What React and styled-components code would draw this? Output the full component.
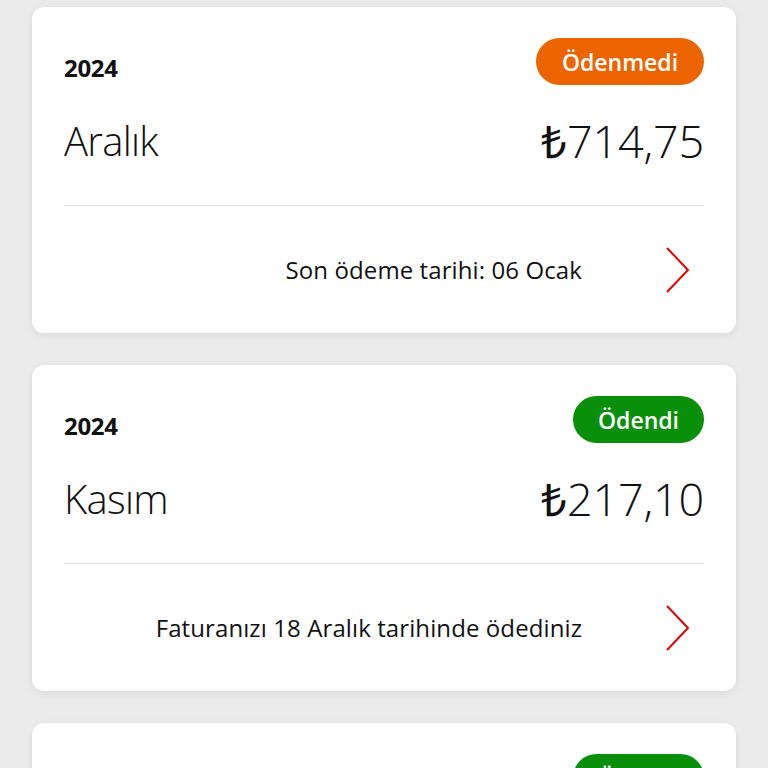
import React from "react";
import styled, { createGlobalStyle } from "styled-components";

const GlobalStyle = createGlobalStyle`
  html, body {
    margin: 0;
    padding: 0;
    background: #ebebeb;
    font-family: "Open Sans", "Liberation Sans", sans-serif;
    color: #111;
  }
`;

const Page = styled.div`
  display: flex;
  flex-direction: column;
  gap: 32px;
  padding: 7px 32px 0;
  height: 768px;
  overflow: hidden;
  box-sizing: border-box;
`;

const Card = styled.div`
  flex-shrink: 0;
  background: #fff;
  border-radius: 12px;
  box-shadow: 0 2px 8px rgba(0, 0, 0, 0.08);
  padding: 31px 32px 0;
  height: 326px;
  box-sizing: border-box;
  display: flex;
  flex-direction: column;
`;

const Header = styled.div`
  display: flex;
  justify-content: space-between;
  align-items: flex-end;
  height: 47px;
`;

const Year = styled.div`
  font-size: 24px;
  font-weight: 700;
  line-height: 1;
  padding-bottom: 5px;
  letter-spacing: -0.3px;
`;

const Badge = styled.div`
  height: 47px;
  padding: 0 20px;
  border-radius: 24px;
  background: ${(p) => (p.paid ? "#0a8f0a" : "#ec6400")};
  color: #fff;
  font-size: 23px;
  font-weight: 600;
  display: flex;
  align-items: center;
  justify-content: center;
  box-sizing: border-box;
  min-width: ${(p) => (p.paid ? "131px" : "168px")};
`;

const MainRow = styled.div`
  display: flex;
  justify-content: space-between;
  align-items: center;
  height: 62px;
  margin-top: 24px;
`;

const Month = styled.div`
  font-size: 40px;
  font-weight: 300;
  letter-spacing: -0.7px;
`;

const Amount = styled.div`
  font-size: 45px;
  font-weight: 300;
  letter-spacing: -0.2px;
`;

const Currency = styled.span`
  font-weight: 500;
`;

const Divider = styled.div`
  height: 1px;
  background: #e6e6e6;
  margin-top: 34px;
`;

const Footer = styled.div`
  display: flex;
  justify-content: flex-end;
  align-items: center;
  height: 127px;
  gap: 82px;
  padding-right: 14px;
`;

const Note = styled.div`
  font-size: 24px;
  font-weight: 400;
  letter-spacing: 0.1px;
`;

const Chevron = () => (
  <svg width="26" height="48" viewBox="0 0 26 48" fill="none">
    <polyline
      points="3,2 24,24 3,46"
      stroke="#e60000"
      strokeWidth="2"
      strokeLinejoin="miter"
    />
  </svg>
);

const bills = [
  {
    id: 1,
    year: "2024",
    month: "Aralık",
    amount: "714,75",
    paid: false,
    note: "Son ödeme tarihi: 06 Ocak",
  },
  {
    id: 2,
    year: "2024",
    month: "Kasım",
    amount: "217,10",
    paid: true,
    note: "Faturanızı 18 Aralık tarihinde ödediniz",
  },
  {
    id: 3,
    year: "2024",
    month: "Ekim",
    amount: "205,40",
    paid: true,
    note: "Faturanızı 18 Kasım tarihinde ödediniz",
  },
];

export default function App() {
  return (
    <>
      <GlobalStyle />
      <Page>
        {bills.map((bill) => (
          <Card key={bill.id}>
            <Header>
              <Year>{bill.year}</Year>
              <Badge paid={bill.paid}>{bill.paid ? "Ödendi" : "Ödenmedi"}</Badge>
            </Header>
            <MainRow>
              <Month>{bill.month}</Month>
              <Amount>
                <Currency>₺</Currency>
                {bill.amount}
              </Amount>
            </MainRow>
            <Divider />
            <Footer>
              <Note>{bill.note}</Note>
              <Chevron />
            </Footer>
          </Card>
        ))}
      </Page>
    </>
  );
}
